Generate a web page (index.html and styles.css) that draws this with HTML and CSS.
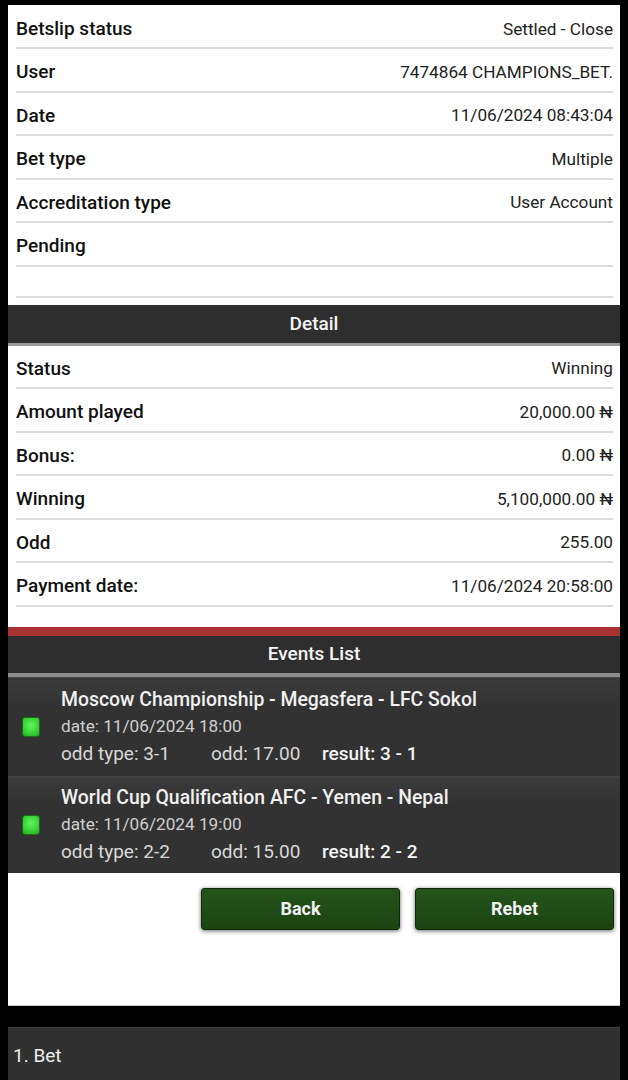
FILE: index.html
```html
<!DOCTYPE html>
<html>
<head>
<meta charset="utf-8">
<link rel="stylesheet" href="styles.css">
</head>
<body>
<div class="panel">
  <div class="rows">
    <div class="row"><span class="label">Betslip status</span><span class="value">Settled - Close</span></div>
    <div class="row"><span class="label">User</span><span class="value">7474864 CHAMPIONS_BET.</span></div>
    <div class="row"><span class="label">Date</span><span class="value">11/06/2024 08:43:04</span></div>
    <div class="row"><span class="label">Bet type</span><span class="value">Multiple</span></div>
    <div class="row"><span class="label">Accreditation type</span><span class="value">User Account</span></div>
    <div class="row"><span class="label">Pending</span><span class="value"></span></div>
    <div class="row empty"></div>
  </div>
  <div class="section-head">Detail</div>
  <div class="rows detail">
    <div class="row"><span class="label">Status</span><span class="value">Winning</span></div>
    <div class="row"><span class="label">Amount played</span><span class="value">20,000.00 ₦</span></div>
    <div class="row"><span class="label">Bonus:</span><span class="value">0.00 ₦</span></div>
    <div class="row"><span class="label">Winning</span><span class="value">5,100,000.00 ₦</span></div>
    <div class="row"><span class="label">Odd</span><span class="value">255.00</span></div>
    <div class="row"><span class="label">Payment date:</span><span class="value">11/06/2024 20:58:00</span></div>
  </div>
  <div class="events-head">Events List</div>
  <div class="events">
    <div class="event">
      <div class="status-icon"></div>
      <div class="event-body">
        <div class="event-title">Moscow Championship - Megasfera - LFC Sokol</div>
        <div class="event-date">date: 11/06/2024 18:00</div>
        <div class="event-odds"><span class="otype">odd type: 3-1</span><span class="odd">odd: 17.00</span><span class="result">result: 3 - 1</span></div>
      </div>
    </div>
    <div class="event">
      <div class="status-icon"></div>
      <div class="event-body">
        <div class="event-title">World Cup Qualification AFC - Yemen - Nepal</div>
        <div class="event-date">date: 11/06/2024 19:00</div>
        <div class="event-odds"><span class="otype">odd type: 2-2</span><span class="odd">odd: 15.00</span><span class="result">result: 2 - 2</span></div>
      </div>
    </div>
  </div>
  <div class="actions">
    <button class="btn">Back</button>
    <button class="btn">Rebet</button>
  </div>
</div>
<div class="footer-bar">1. Bet</div>
</body>
</html>
```
FILE: styles.css
```css
* { box-sizing: border-box; }
html, body { margin: 0; padding: 0; }
body {
  background: #000;
  font-family: Roboto, "Liberation Sans", Arial, sans-serif;
  padding-top: 5px;
  height: 1080px;
  overflow: hidden;
}
.panel {
  margin: 0 8px;
  background: #fff;
}
.rows {
  padding: 0 7px 0 8px;
}
.row {
  display: flex;
  justify-content: space-between;
  align-items: center;
  height: 43.5px;
  border-bottom: 2px solid #dcdcdc;
  padding-top: 4px;
  font-size: 18px;
}
.rows > .row:first-child { height: 44px; padding-top: 5px; }
.row.empty { height: 31px; }
.label { font-weight: 500; color: #111; font-size: 19px; }
.value { color: #222; font-size: 17.2px; }
.section-head {
  margin-top: 7px;
  height: 41px;
  background: #2e2e2e;
  border-bottom: 3px solid #9a9a9a;
  color: #f4f4f4;
  font-weight: 500;
  font-size: 19px;
  display: flex;
  align-items: center;
  justify-content: center;
}
.detail .row:first-child { height: 43.5px; padding-top: 4px; }
.detail { padding-bottom: 20px; }
.events-head {
  height: 50px;
  background: #2e2e2e;
  border-top: 9px solid #a83232;
  border-bottom: 4px solid #8c8c8c;
  color: #f4f4f4;
  font-weight: 500;
  font-size: 19px;
  display: flex;
  align-items: center;
  justify-content: center;
  padding-bottom: 1px;
}
.events { background: #333; }
.event {
  display: flex;
  align-items: center;
  height: 99px;
  background: linear-gradient(#3b3b3b, #323232 30%, #323232);
  border-top: 1px solid #454545;
}
.event + .event { height: 97px; }
.status-icon {
  flex: none;
  width: 18px;
  height: 20px;
  margin: 0 21px 0 14px;
  border-radius: 3px;
  background: radial-gradient(circle at 50% 40%, #66f560, #35cc35 65%, #22a622);
  border: 1px solid #157015;
}
.event-body {
  display: flex;
  flex-direction: column;
}
.event-title { color: #f0f0f0; font-weight: 500; font-size: 19.4px; line-height: 27px; }
.event-date { color: #cfcfcf; font-size: 17.2px; line-height: 27px; }
.event-odds { color: #d8d8d8; font-size: 19px; line-height: 28px; display: flex; }
.otype { width: 150px; }
.odd { width: 111px; }
.result { color: #f4f4f4; font-weight: 500; }
.actions {
  display: flex;
  justify-content: flex-end;
  gap: 15px;
  padding: 15px 6px 75px 0;
  border-bottom: 1px solid #ccc;
}
.btn {
  width: 199px;
  height: 42px;
  border-radius: 3px;
  border: 1px solid #0f2a08;
  background: linear-gradient(#24531a, #1c4412);
  box-shadow: 0 1px 4px rgba(0,0,0,0.6);
  color: #f2f2f2;
  font-family: Roboto, "Liberation Sans", Arial, sans-serif;
  font-weight: 700;
  font-size: 18px;
}
.footer-bar {
  margin: 21px 8px 0;
  height: 60px;
  background: #303030;
  border-top: 1px solid #444;
  color: #eee;
  font-size: 19px;
  padding: 16px 0 0 5px;
}
```
